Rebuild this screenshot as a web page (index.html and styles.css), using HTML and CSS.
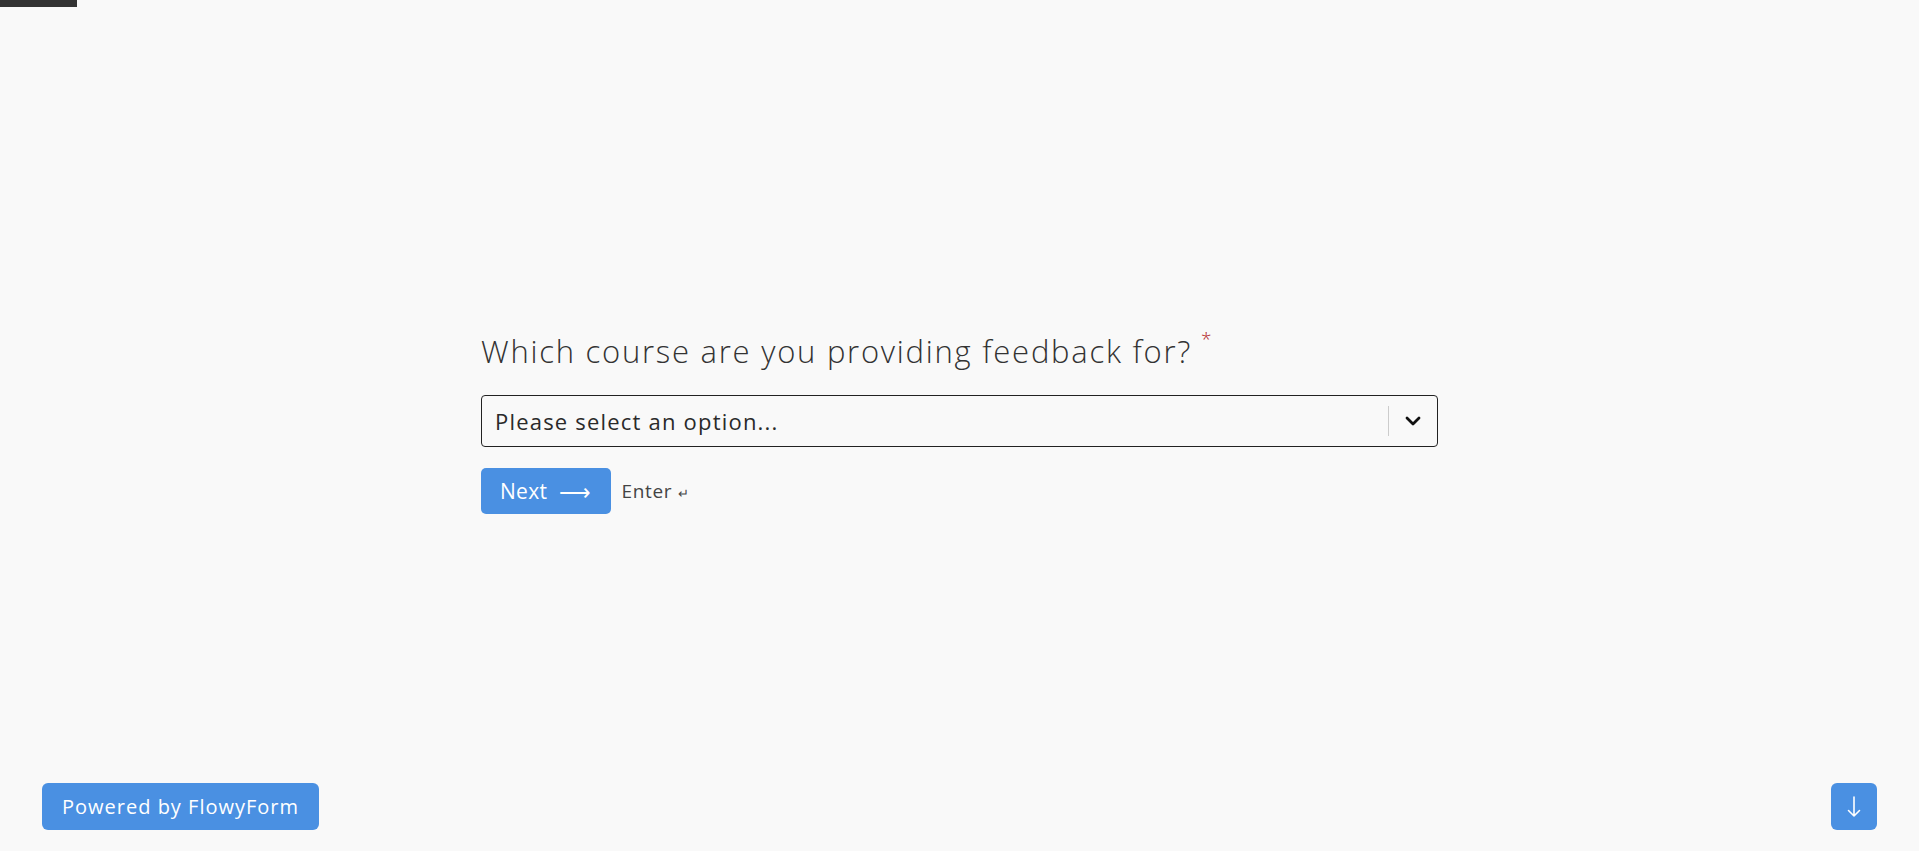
FILE: index.html
```html
<!DOCTYPE html>
<html lang="en">
<head>
  <meta charset="UTF-8">
  <meta name="viewport" content="width=device-width, initial-scale=1.0">
  <title>Course Feedback</title>
  <link rel="stylesheet" href="styles.css">
</head>
<body>
  <div class="progress"><span class="progress-fill"></span></div>

  <main class="stage">
    <div class="question">
      <h1 class="question-title">Which course are you providing feedback for?<span class="required">*</span></h1>

      <div class="select-box">
        <span class="select-placeholder">Please select an option...</span>
        <span class="select-divider"></span>
        <span class="select-chevron">
          <svg width="16" height="10" viewBox="0 0 16 10"><path d="M2 2l6 6 6-6" fill="none" stroke="#111" stroke-width="2.8" stroke-linecap="round" stroke-linejoin="round"/></svg>
        </span>
      </div>

      <div class="actions">
        <button class="next-button">Next <span class="arrow">&#10230;</span></button>
        <span class="enter-hint">Enter <span class="enter-key">&#8629;</span></span>
      </div>
    </div>
  </main>

  <footer class="footer">
    <a class="powered" href="#">Powered by FlowyForm</a>
    <button class="scroll-button">
      <svg width="14" height="22" viewBox="0 0 14 22"><path d="M7 1v19M1.5 14.5L7 20l5.5-5.5" fill="none" stroke="#fff" stroke-width="1.6" stroke-linecap="round" stroke-linejoin="round"/></svg>
    </button>
  </footer>
</body>
</html>
```

FILE: styles.css
```css
html, body {
  height: 100%;
}

body {
  display: flex;
  flex-direction: column;
  margin: 0;
  font-family: "Open Sans", Lato, sans-serif;
  background-color: #f9f9f9;
  color: #333;
}

.progress {
  height: 7px;
  flex-shrink: 0;
}

.progress-fill {
  display: block;
  width: 77px;
  height: 100%;
  background-color: #333;
}

.stage {
  flex: 1;
  display: flex;
  align-items: center;
  justify-content: center;
}

.question {
  width: 957px;
  padding-top: 54px;
}

.question-title {
  margin: 0 0 23px;
  font-size: 31px;
  font-weight: 300;
  letter-spacing: 1.75px;
  color: #333;
}

.required {
  position: relative;
  top: -17px;
  margin-left: 9px;
  font-size: 19px;
  letter-spacing: 0;
  color: #b22222;
}

.select-box {
  display: flex;
  align-items: center;
  height: 52px;
  box-sizing: border-box;
  border: 1px solid #222;
  border-radius: 4px;
  background-color: #f9f9f9;
}

.select-placeholder {
  flex: 1;
  padding-left: 13px;
  font-size: 22px;
  font-weight: 400;
  letter-spacing: 1.2px;
  color: #2a2a2a;
}

.select-divider {
  width: 1px;
  height: 30px;
  background-color: #ccc;
}

.select-chevron {
  display: flex;
  align-items: center;
  justify-content: center;
  width: 48px;
}

.actions {
  display: flex;
  align-items: center;
  margin-top: 21px;
}

.next-button {
  display: flex;
  align-items: center;
  gap: 12px;
  height: 46px;
  padding: 0 19px;
  border: none;
  border-radius: 5px;
  background-color: #4a90e2;
  color: #fff;
  font-family: inherit;
  font-size: 21px;
  letter-spacing: 0.3px;
  cursor: pointer;
}

.arrow {
  font-size: 22px;
}

.enter-hint {
  margin-left: 11px;
  font-size: 19px;
  letter-spacing: 0.6px;
  color: #444;
}

.enter-key {
  font-size: 13px;
}

.footer {
  display: flex;
  justify-content: space-between;
  align-items: center;
  padding: 0 42px 21px;
}

.powered {
  display: inline-block;
  padding: 0 20px;
  line-height: 47px;
  border-radius: 6px;
  background-color: #4a90e2;
  color: #fff;
  font-size: 20px;
  letter-spacing: 1px;
  text-decoration: none;
}

.scroll-button {
  display: flex;
  align-items: center;
  justify-content: center;
  width: 46px;
  height: 47px;
  border: none;
  border-radius: 6px;
  background-color: #4a90e2;
  cursor: pointer;
}
```
